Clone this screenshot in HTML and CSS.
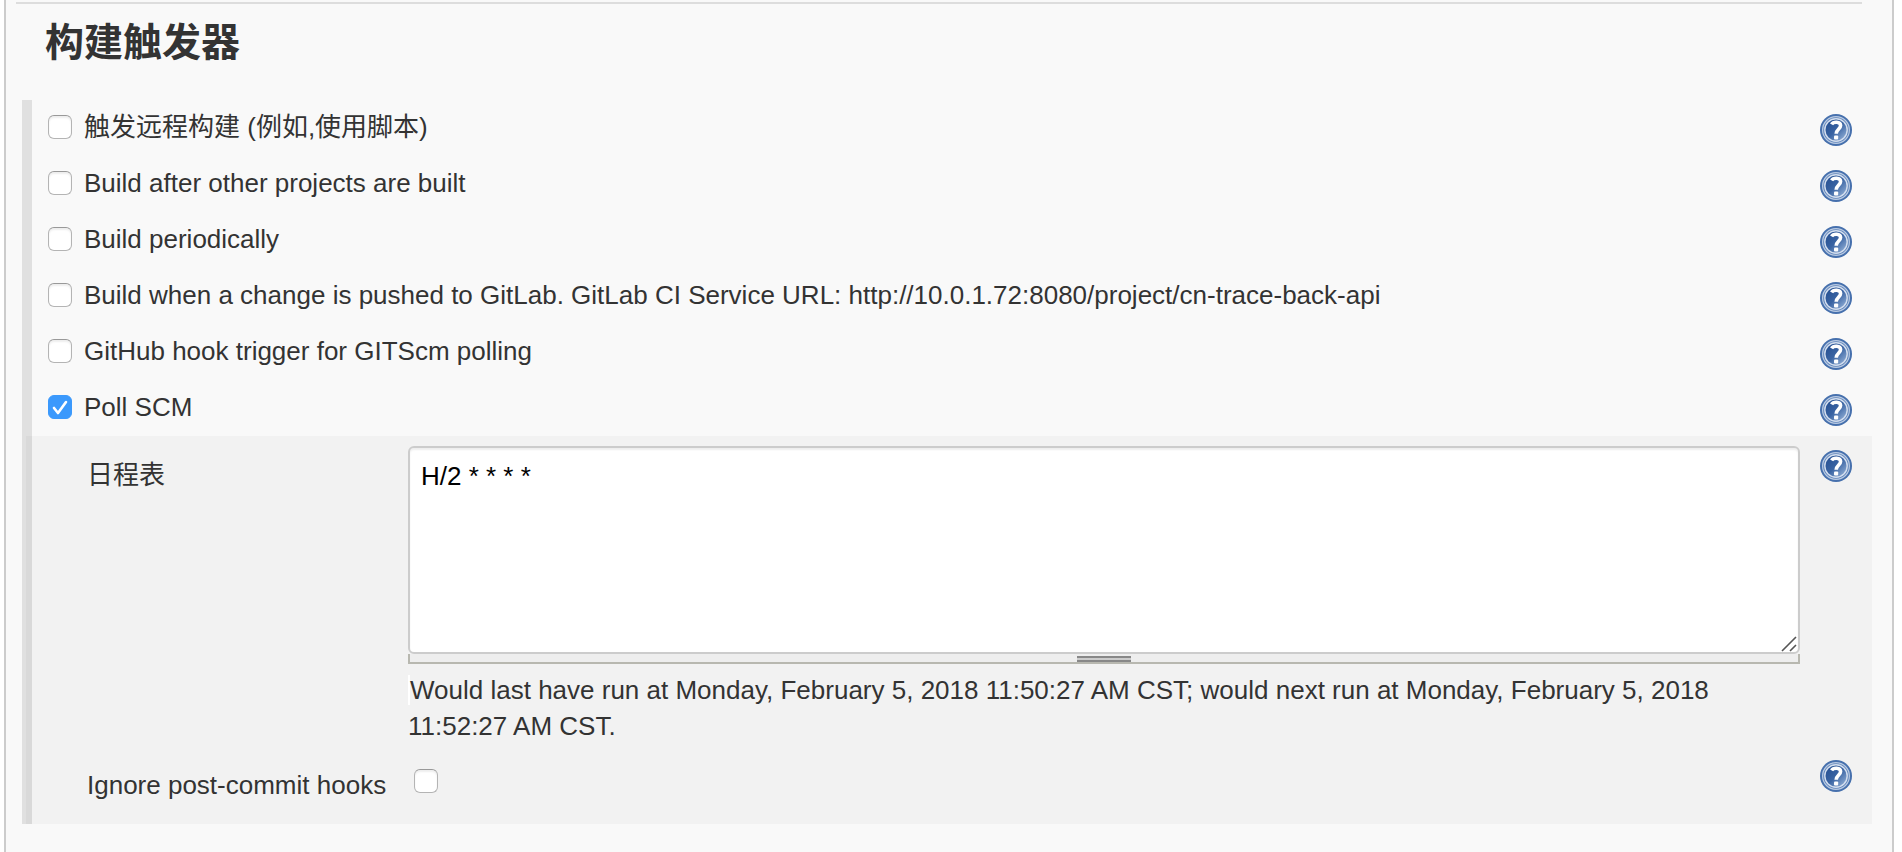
FILE: index.html
```html
<!DOCTYPE html>
<html lang="zh-CN">
<head>
<meta charset="utf-8">
<title>构建触发器</title>
<link rel="stylesheet" href="styles.css">
</head>
<body>
<svg class="defs" aria-hidden="true">
  <defs>
    <linearGradient id="disc" x1="0" y1="0" x2="1" y2="1">
      <stop offset="0.2" stop-color="#2b5596"/>
      <stop offset="0.5" stop-color="#3a64a3"/>
      <stop offset="0.9" stop-color="#8eacd4"/>
    </linearGradient>
    <symbol id="help" viewBox="0 0 32 32">
      <circle cx="16" cy="16" r="16" fill="#4670ad"/>
      <circle cx="16" cy="16" r="13.4" fill="#5f84ba" stroke="#b9cae2" stroke-width="1.2"/>
      <circle cx="16" cy="16" r="11.2" fill="url(#disc)" stroke="#d3deee" stroke-width="1.4"/>
      <path d="M11.6 10.4C13.2 7.6 20.6 7.2 20.6 11.6C20.6 15 16.4 15 16.2 19.8" fill="none" stroke="#fff" stroke-width="3.6"/>
      <rect x="14" y="21.6" width="4.2" height="4" rx="1" fill="#fff"/>
    </symbol>
  </defs>
</svg>
<main class="panel">
  <hr class="rule">
  <h1 class="title">构建触发器</h1>
  <form class="section">
    <div class="row">
      <label class="option"><input class="check" type="checkbox"><span>触发远程构建 (例如,使用脚本)</span></label>
      <button class="help" type="button" aria-label="Help"><svg><use href="#help"/></svg></button>
    </div>
    <div class="row">
      <label class="option"><input class="check" type="checkbox"><span>Build after other projects are built</span></label>
      <button class="help" type="button" aria-label="Help"><svg><use href="#help"/></svg></button>
    </div>
    <div class="row">
      <label class="option"><input class="check" type="checkbox"><span>Build periodically</span></label>
      <button class="help" type="button" aria-label="Help"><svg><use href="#help"/></svg></button>
    </div>
    <div class="row">
      <label class="option"><input class="check" type="checkbox"><span>Build when a change is pushed to GitLab. GitLab CI Service URL: http://10.0.1.72:8080/project/cn-trace-back-api</span></label>
      <button class="help" type="button" aria-label="Help"><svg><use href="#help"/></svg></button>
    </div>
    <div class="row">
      <label class="option"><input class="check" type="checkbox"><span>GitHub hook trigger for GITScm polling</span></label>
      <button class="help" type="button" aria-label="Help"><svg><use href="#help"/></svg></button>
    </div>
    <div class="row">
      <label class="option"><input class="check" type="checkbox" checked><span>Poll SCM</span></label>
      <button class="help" type="button" aria-label="Help"><svg><use href="#help"/></svg></button>
    </div>
    <div class="nested">
      <div class="field">
        <label class="name" for="schedule">日程表</label>
        <div class="value">
          <div class="editor">
            <textarea class="schedule" id="schedule" spellcheck="false">H/2 * * * *</textarea>
            <svg class="grip" viewBox="0 0 16 16" aria-hidden="true"><path d="M1 15L15 1M9 15L15 9" stroke="#555" stroke-width="1.6"/></svg>
          </div>
          <div class="resizer"><span class="handle"></span></div>
          <p class="note"><span class="result">Would last have run at Monday, February 5, 2018 11:50:27 AM CST; would next run at Monday, February 5, 2018 11:52:27 AM CST.</span></p>
        </div>
        <button class="help" type="button" aria-label="Help"><svg><use href="#help"/></svg></button>
      </div>
      <div class="field">
        <label class="name" for="ignore">Ignore post-commit hooks</label>
        <div class="value"><input class="check ignore" id="ignore" type="checkbox"></div>
        <button class="help" type="button" aria-label="Help"><svg><use href="#help"/></svg></button>
      </div>
    </div>
  </form>
</main>
</body>
</html>
```

FILE: styles.css
```css
* {
  box-sizing: border-box;
}

body {
  margin: 0;
  background: #fff;
  color: #333;
  font: 26px/36px "Liberation Sans", "Noto Sans CJK SC", sans-serif;
}

.defs {
  position: absolute;
  width: 0;
  height: 0;
}

.panel {
  min-height: 100vh;
  margin: 0 8px 0 4px;
  padding: 2px 20px 28px 16px;
  border: 2px solid #ccc;
  border-width: 0 2px;
  background: #f9f9f9;
}

.rule {
  height: 2px;
  margin: 0 10px 0 -6px;
  border: 0;
  background: #ddd;
}

.title {
  margin: 9px 0 27px;
  padding-left: 23px;
  font-size: 39px;
  line-height: 60px;
  font-weight: 700;
}

.section {
  border-left: 10px solid #e0e0e0;
}

.row {
  display: flex;
  justify-content: space-between;
  min-height: 56px;
  padding: 9px 20px 0 16px;
}

.option {
  display: flex;
  align-items: center;
  gap: 12px;
  height: 36px;
}

.check {
  flex: none;
  appearance: none;
  width: 24px;
  height: 24px;
  margin: 0;
  border: 1px solid #b4b4b4;
  border-top-color: #999;
  border-radius: 6px;
  background: #fff;
  box-shadow: inset 0 2px 2px #eee;
}

.check:checked {
  border-color: #3b99fc;
  background: #3b99fc url("data:image/svg+xml,%3Csvg xmlns='http://www.w3.org/2000/svg' viewBox='0 0 22 22'%3E%3Cpath d='M5 12L9 17L17 6' fill='none' stroke='white' stroke-width='2.6' stroke-linecap='round' stroke-linejoin='round'/%3E%3C/svg%3E");
  box-shadow: none;
}

.help {
  flex: none;
  width: 32px;
  height: 32px;
  margin-top: 5px;
  padding: 0;
  border: 0;
  background: none;
}

.help svg {
  display: block;
  width: 32px;
  height: 32px;
}

.nested {
  margin-left: -6px;
  padding: 0 20px 21px 61px;
  background: rgba(0, 0, 0, 0.027);
}

.field {
  display: grid;
  grid-template-columns: 321px 1fr 32px;
  padding-top: 10px;
}

.field .help {
  margin: 4px 0 0;
}

.name {
  padding-top: 11px;
  white-space: nowrap;
}

.value {
  padding-right: 20px;
}

.editor {
  display: grid;
  position: relative;
}

.schedule {
  width: 100%;
  height: 208px;
  padding: 10px 11px;
  border: 2px solid #ccc;
  border-radius: 6px;
  background: #fff;
  box-shadow: inset 0 2px 2px #eee;
  color: #000;
  font: inherit;
  resize: none;
}

.grip {
  position: absolute;
  right: 3px;
  bottom: 2px;
  width: 16px;
  height: 16px;
}

.resizer {
  display: flex;
  justify-content: center;
  height: 10px;
  padding-top: 2px;
  border: 2px solid #b8b8b0;
  border-top: 0;
  background: #eee;
}

.handle {
  width: 54px;
  height: 6px;
  border: 2px solid #888;
  border-width: 2px 0;
  background: #ccc;
}

.note {
  margin: 8px 0 2px;
}

.result {
  border-left: 2px solid #fff;
}

.ignore {
  display: block;
  margin: 13px 6px 0;
}
```
